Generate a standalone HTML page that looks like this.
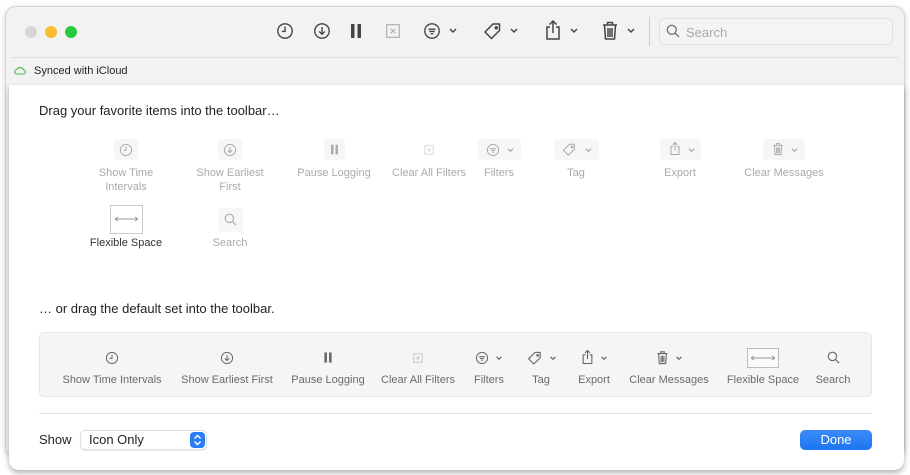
<!DOCTYPE html>
<html><head><meta charset="utf-8"><style>
*{margin:0;padding:0;box-sizing:border-box}
body{width:910px;height:475px;background:#fff;position:relative;overflow:hidden;font-family:"Liberation Sans",sans-serif;color:#222}
.a{position:absolute}
.win{left:5px;top:6px;width:900px;height:452px;background:#f2f2f2;border-radius:11px;border:1px solid #d4d4d4;box-shadow:0 1px 6px rgba(0,0,0,.18)}
.sheet{left:9px;top:85px;width:895px;height:385px;background:#fff;border-radius:0 0 10px 10px;box-shadow:0 3px 6px rgba(0,0,0,.3)}
svg{position:absolute;overflow:visible}
.lbl{position:absolute;font-size:11px;color:#aaa;text-align:center;width:110px;line-height:14px}
.lb2{position:absolute;font-size:11px;color:#6a6a6a;text-align:center;white-space:nowrap;transform:translateX(-50%)}
.bx{position:absolute;background:#f6f6f6;border-radius:4px;height:21px;top:139px}
</style></head><body>
<div class="a win"></div>
<!-- traffic lights -->
<div class="a" style="left:25px;top:26px;width:12px;height:12px;border-radius:50%;background:#d6d6d6"></div>
<div class="a" style="left:45px;top:26px;width:12px;height:12px;border-radius:50%;background:#f9bd2e"></div>
<div class="a" style="left:65px;top:26px;width:12px;height:12px;border-radius:50%;background:#2ac840"></div>
<!-- toolbar icons -->
<svg width="0" height="0" style="left:0;top:0"></svg>
<svg style="left:276px;top:22px" width="18" height="18" viewBox="0 0 20 20" fill="none" stroke="#444" stroke-width="1.5"><circle cx="10" cy="10" r="8"/><path d="M10 5v5.5H6.5"/></svg>
<svg style="left:313px;top:22px" width="18" height="18" viewBox="0 0 20 20" fill="none" stroke="#444" stroke-width="1.5"><circle cx="10" cy="10" r="8"/><path d="M10 5.5v8M6.8 10.5l3.2 3.2 3.2-3.2"/></svg>
<svg style="left:348px;top:22px" width="16" height="18" viewBox="0 0 16 18" fill="#444"><rect x="3" y="2" width="3.5" height="14" rx=".5"/><rect x="9.5" y="2" width="3.5" height="14" rx=".5"/></svg>
<svg style="left:384px;top:22px" width="18" height="18" viewBox="0 0 20 20" fill="none" stroke="#aaa" stroke-width="1.2"><rect x="3" y="3" width="14" height="14"/><path d="M7.5 7.5l5 5M12.5 7.5l-5 5"/></svg>
<svg style="left:423px;top:22px" width="18" height="18" viewBox="0 0 20 20" fill="none" stroke="#444" stroke-width="1.5"><circle cx="10" cy="10" r="8"/><path d="M6 8h8M7 10.5h6M8.5 13h3"/></svg>
<svg style="left:483px;top:21px" width="20" height="20" viewBox="0 0 20 20" fill="none" stroke="#444" stroke-width="1.5"><path d="M2 11l8-8h6.5v6.5l-8 8z"/><circle cx="13.3" cy="6.7" r="1"/></svg>
<svg style="left:544px;top:19px" width="18" height="22" viewBox="0 0 18 22" fill="none" stroke="#444" stroke-width="1.5"><path d="M6 8H3v12h12V8h-3M9 2v12M5.5 5.5L9 2l3.5 3.5"/></svg>
<svg style="left:601px;top:20px" width="18" height="21" viewBox="0 0 18 21" fill="none" stroke="#444" stroke-width="1.5"><path d="M2 5h14M6.5 5V2.5h5V5M3.5 5l1 14h9l1-14M7 8v9M9 8v9M11 8v9"/></svg>
<svg style="left:449px;top:28px" width="8" height="6" viewBox="0 0 8 6" fill="none" stroke="#444" stroke-width="1.4"><path d="M1 1l3 3 3-3"/></svg>
<svg style="left:510px;top:28px" width="8" height="6" viewBox="0 0 8 6" fill="none" stroke="#444" stroke-width="1.4"><path d="M1 1l3 3 3-3"/></svg>
<svg style="left:570px;top:28px" width="8" height="6" viewBox="0 0 8 6" fill="none" stroke="#444" stroke-width="1.4"><path d="M1 1l3 3 3-3"/></svg>
<svg style="left:627px;top:28px" width="8" height="6" viewBox="0 0 8 6" fill="none" stroke="#444" stroke-width="1.4"><path d="M1 1l3 3 3-3"/></svg>
<div class="a" style="left:649px;top:17px;width:1px;height:29px;background:#ccc"></div>
<div class="a" style="left:659px;top:18px;width:234px;height:27px;border:1px solid #e0e0e0;border-radius:6px;background:#f4f4f4"></div>
<svg style="left:666px;top:24px" width="14" height="14" viewBox="0 0 14 14" fill="none" stroke="#777" stroke-width="1.4"><circle cx="5.8" cy="5.8" r="4.5"/><path d="M9 9l4 4"/></svg>
<div class="a" style="left:686px;top:25px;font-size:13px;color:#aaa">Search</div>
<div class="a" style="left:12px;top:57px;width:886px;height:1px;background:#dedede"></div>
<svg style="left:14px;top:66px" width="12" height="9" viewBox="0 0 12 9" fill="none" stroke="#3cc34a" stroke-width="1.1"><path d="M2.5 8h7a2 2 0 0 0 0-4 3.5 3.5 0 0 0-6.5-.5A2.3 2.3 0 0 0 2.5 8z"/></svg>
<div class="a" style="left:34px;top:65px;font-size:11px;color:#222">Synced with iCloud</div>

<div class="a sheet"></div>
<div class="a" style="left:39px;top:103px;font-size:13px;color:#222">Drag your favorite items into the toolbar…</div>

<!-- palette row 1 -->
<div class="bx" style="left:114px;width:24px"></div>
<div class="bx" style="left:218px;width:24px"></div>
<div class="bx" style="left:324px;width:21px"></div>
<div class="bx" style="left:478px;width:43px"></div>
<div class="bx" style="left:554px;width:45px"></div>
<div class="bx" style="left:660px;width:41px"></div>
<div class="bx" style="left:763px;width:42px"></div>
<svg style="left:119px;top:143px" width="14" height="14" viewBox="0 0 20 20" fill="none" stroke="#aaa" stroke-width="1.4"><circle cx="10" cy="10" r="8"/><path d="M10 5v5.5H6.5"/></svg>
<svg style="left:223px;top:143px" width="14" height="14" viewBox="0 0 20 20" fill="none" stroke="#aaa" stroke-width="1.4"><circle cx="10" cy="10" r="8"/><path d="M10 5.5v8M6.8 10.5l3.2 3.2 3.2-3.2"/></svg>
<svg style="left:329px;top:143px" width="11" height="13" viewBox="0 0 16 18" fill="#aaa"><rect x="3" y="2" width="3.5" height="14"/><rect x="9.5" y="2" width="3.5" height="14"/></svg>
<svg style="left:423px;top:144px" width="12" height="12" viewBox="0 0 20 20" fill="none" stroke="#ccc" stroke-width="1.3"><rect x="3" y="3" width="14" height="14"/><path d="M7.5 7.5l5 5M12.5 7.5l-5 5"/></svg>
<svg style="left:486px;top:143px" width="14" height="14" viewBox="0 0 20 20" fill="none" stroke="#aaa" stroke-width="1.4"><circle cx="10" cy="10" r="8"/><path d="M6 8h8M7 10.5h6M8.5 13h3"/></svg>
<svg style="left:562px;top:142px" width="15" height="15" viewBox="0 0 20 20" fill="none" stroke="#aaa" stroke-width="1.4"><path d="M2 11l8-8h6.5v6.5l-8 8z"/><circle cx="13.3" cy="6.7" r="1"/></svg>
<svg style="left:669px;top:141px" width="12" height="15" viewBox="0 0 18 22" fill="none" stroke="#aaa" stroke-width="1.5"><path d="M6 8H3v12h12V8h-3M9 2v12M5.5 5.5L9 2l3.5 3.5"/></svg>
<svg style="left:772px;top:142px" width="12" height="14" viewBox="0 0 18 21" fill="none" stroke="#aaa" stroke-width="1.5"><path d="M2 5h14M6.5 5V2.5h5V5M3.5 5l1 14h9l1-14M7 8v9M9 8v9M11 8v9"/></svg>
<svg style="left:507px;top:148px" width="7" height="5" viewBox="0 0 8 6" fill="none" stroke="#aaa" stroke-width="1.4"><path d="M1 1l3 3 3-3"/></svg>
<svg style="left:585px;top:148px" width="7" height="5" viewBox="0 0 8 6" fill="none" stroke="#aaa" stroke-width="1.4"><path d="M1 1l3 3 3-3"/></svg>
<svg style="left:688px;top:148px" width="7" height="5" viewBox="0 0 8 6" fill="none" stroke="#aaa" stroke-width="1.4"><path d="M1 1l3 3 3-3"/></svg>
<svg style="left:791px;top:148px" width="7" height="5" viewBox="0 0 8 6" fill="none" stroke="#aaa" stroke-width="1.4"><path d="M1 1l3 3 3-3"/></svg>
<div class="lbl" style="left:71px;top:166px">Show Time<br>Intervals</div>
<div class="lbl" style="left:175px;top:166px">Show Earliest<br>First</div>
<div class="lbl" style="left:279px;top:166px">Pause Logging</div>
<div class="lbl" style="left:374px;top:166px">Clear All Filters</div>
<div class="lbl" style="left:444px;top:166px">Filters</div>
<div class="lbl" style="left:521px;top:166px">Tag</div>
<div class="lbl" style="left:625px;top:166px">Export</div>
<div class="lbl" style="left:729px;top:166px">Clear Messages</div>
<!-- row 2 -->
<div class="a" style="left:110px;top:205px;width:33px;height:29px;border:1px solid #ccc;background:#fff"></div>
<svg style="left:114px;top:216px" width="25" height="6" viewBox="0 0 25 6" fill="none" stroke="#999" stroke-width="1"><path d="M1 3h23M1 3l3-2M1 3l3 2M24 3l-3-2M24 3l-3 2"/></svg>
<div class="lbl" style="left:71px;top:236px;color:#333">Flexible Space</div>
<div class="bx" style="left:218px;top:208px;width:25px;height:24px"></div>
<svg style="left:224px;top:213px" width="13" height="13" viewBox="0 0 14 14" fill="none" stroke="#aaa" stroke-width="1.2"><circle cx="5.8" cy="5.8" r="4.5"/><path d="M9 9l4 4"/></svg>
<div class="lbl" style="left:175px;top:236px">Search</div>

<div class="a" style="left:39px;top:301px;font-size:13px;color:#222">… or drag the default set into the toolbar.</div>
<div class="a" style="left:39px;top:332px;width:833px;height:65px;background:#f5f5f5;border:1px solid #e8e8e8;border-radius:5px"></div>
<svg style="left:105px;top:351px" width="14" height="14" viewBox="0 0 20 20" fill="none" stroke="#666" stroke-width="1.4"><circle cx="10" cy="10" r="8"/><path d="M10 5v5.5H6.5"/></svg>
<svg style="left:220px;top:351px" width="14" height="14" viewBox="0 0 20 20" fill="none" stroke="#666" stroke-width="1.4"><circle cx="10" cy="10" r="8"/><path d="M10 5.5v8M6.8 10.5l3.2 3.2 3.2-3.2"/></svg>
<svg style="left:322px;top:351px" width="12" height="13" viewBox="0 0 16 18" fill="#666"><rect x="3" y="2" width="3.5" height="14"/><rect x="9.5" y="2" width="3.5" height="14"/></svg>
<svg style="left:412px;top:352px" width="12" height="12" viewBox="0 0 20 20" fill="none" stroke="#bbb" stroke-width="1.3"><rect x="3" y="3" width="14" height="14"/><path d="M7.5 7.5l5 5M12.5 7.5l-5 5"/></svg>
<svg style="left:475px;top:351px" width="14" height="14" viewBox="0 0 20 20" fill="none" stroke="#666" stroke-width="1.4"><circle cx="10" cy="10" r="8"/><path d="M6 8h8M7 10.5h6M8.5 13h3"/></svg>
<svg style="left:527px;top:350px" width="16" height="16" viewBox="0 0 20 20" fill="none" stroke="#666" stroke-width="1.4"><path d="M2 11l8-8h6.5v6.5l-8 8z"/><circle cx="13.3" cy="6.7" r="1"/></svg>
<svg style="left:581px;top:349px" width="13" height="16" viewBox="0 0 18 22" fill="none" stroke="#666" stroke-width="1.5"><path d="M6 8H3v12h12V8h-3M9 2v12M5.5 5.5L9 2l3.5 3.5"/></svg>
<svg style="left:656px;top:350px" width="13" height="15" viewBox="0 0 18 21" fill="none" stroke="#666" stroke-width="1.5"><path d="M2 5h14M6.5 5V2.5h5V5M3.5 5l1 14h9l1-14M7 8v9M9 8v9M11 8v9"/></svg>
<svg style="left:495px;top:356px" width="8" height="5" viewBox="0 0 8 6" fill="none" stroke="#666" stroke-width="1.4"><path d="M1 1l3 3 3-3"/></svg>
<svg style="left:549px;top:356px" width="8" height="5" viewBox="0 0 8 6" fill="none" stroke="#666" stroke-width="1.4"><path d="M1 1l3 3 3-3"/></svg>
<svg style="left:600px;top:356px" width="8" height="5" viewBox="0 0 8 6" fill="none" stroke="#666" stroke-width="1.4"><path d="M1 1l3 3 3-3"/></svg>
<svg style="left:675px;top:356px" width="8" height="5" viewBox="0 0 8 6" fill="none" stroke="#666" stroke-width="1.4"><path d="M1 1l3 3 3-3"/></svg>
<div class="a" style="left:747px;top:348px;width:32px;height:20px;border:1px solid #bbb;background:#fafafa"></div>
<svg style="left:750px;top:355px" width="26" height="6" viewBox="0 0 26 6" fill="none" stroke="#999" stroke-width="1"><path d="M1 3h24M1 3l3-2M1 3l3 2M25 3l-3-2M25 3l-3 2"/></svg>
<svg style="left:827px;top:351px" width="13" height="13" viewBox="0 0 14 14" fill="none" stroke="#666" stroke-width="1.2"><circle cx="5.8" cy="5.8" r="4.5"/><path d="M9 9l4 4"/></svg>
<div class="lb2" style="left:112px;top:374px">Show Time Intervals</div>
<div class="lb2" style="left:227px;top:374px">Show Earliest First</div>
<div class="lb2" style="left:328px;top:374px">Pause Logging</div>
<div class="lb2" style="left:418px;top:374px">Clear All Filters</div>
<div class="lb2" style="left:489px;top:374px">Filters</div>
<div class="lb2" style="left:541px;top:374px">Tag</div>
<div class="lb2" style="left:594px;top:374px">Export</div>
<div class="lb2" style="left:669px;top:374px">Clear Messages</div>
<div class="lb2" style="left:763px;top:374px">Flexible Space</div>
<div class="lb2" style="left:833px;top:374px">Search</div>

<div class="a" style="left:39px;top:413px;width:833px;height:1px;background:#e2e2e2"></div>
<div class="a" style="left:39px;top:432px;font-size:13px;color:#222">Show</div>
<div class="a" style="left:80px;top:430px;width:127px;height:20px;border:1px solid #ddd;border-radius:5px;background:#fff;box-shadow:0 1px 1px rgba(0,0,0,.08)"></div>
<div class="a" style="left:89px;top:432px;font-size:13px;color:#222">Icon Only</div>
<div class="a" style="left:190px;top:432px;width:15px;height:16px;border-radius:4px;background:#2a7ef5"></div>
<svg style="left:193px;top:434px" width="9" height="12" viewBox="0 0 9 12" fill="none" stroke="#fff" stroke-width="1.4"><path d="M1.5 4.5l3-3 3 3M1.5 7.5l3 3 3-3"/></svg>
<div class="a" style="left:800px;top:430px;width:72px;height:20px;border-radius:5px;background:linear-gradient(#3a8cf8,#1d74f0)"></div>
<div class="a" style="left:800px;top:432px;width:72px;text-align:center;font-size:13px;color:#fff">Done</div>
</body></html>
